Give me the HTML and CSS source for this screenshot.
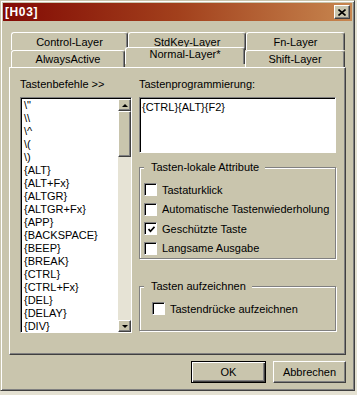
FILE: index.html
```html
<!DOCTYPE html>
<html lang="de">
    <head>
        <meta charset="UTF-8" />
        <meta name="viewport" content="width=device-width, initial-scale=1.0" />
        <title>[H03]</title>
        <link rel="stylesheet" href="styles.css">
    </head>
    <body>
        <div class="window">
            <!-- Titelleiste -->
            <div class="titlebar">
                <span class="title">[H03]</span>
                <button class="close">
                    <svg width="8" height="7" viewBox="0 0 8 7">
                        <path d="M0.5 0.5 L7.5 6.5 M7.5 0.5 L0.5 6.5" stroke="#000" stroke-width="1.6" fill="none" />
                    </svg>
                </button>
            </div>

            <div class="content">
                <!-- Registerkarten -->
                <div class="tabs">
                    <div class="tab-row back">
                        <div class="tab">Control-Layer</div>
                        <div class="tab">StdKey-Layer</div>
                        <div class="tab">Fn-Layer</div>
                    </div>
                    <div class="tab-row front">
                        <div class="tab">AlwaysActive</div>
                        <div class="tab active">Normal-Layer*</div>
                        <div class="tab">Shift-Layer</div>
                    </div>
                </div>

                <div class="panel">
                    <!-- Befehlsliste -->
                    <div class="col-left">
                        <div class="label">Tastenbefehle &gt;&gt;</div>
                        <div class="listbox">
                            <ul class="items">
                                <li>\"</li>
                                <li>\\</li>
                                <li>\^</li>
                                <li>\(</li>
                                <li>\)</li>
                                <li>{ALT}</li>
                                <li>{ALT+Fx}</li>
                                <li>{ALTGR}</li>
                                <li>{ALTGR+Fx}</li>
                                <li>{APP}</li>
                                <li>{BACKSPACE}</li>
                                <li>{BEEP}</li>
                                <li>{BREAK}</li>
                                <li>{CTRL}</li>
                                <li>{CTRL+Fx}</li>
                                <li>{DEL}</li>
                                <li>{DELAY}</li>
                                <li>{DIV}</li>
                            </ul>
                            <div class="scrollbar">
                                <div class="sb-btn"><span class="arrow-up"></span></div>
                                <div class="sb-track"><div class="sb-thumb"></div></div>
                                <div class="sb-btn"><span class="arrow-down"></span></div>
                            </div>
                        </div>
                    </div>

                    <!-- Programmierung und Attribute -->
                    <div class="col-right">
                        <div class="label">Tastenprogrammierung:</div>
                        <div class="textbox">{CTRL}{ALT}{F2}</div>

                        <div class="group attrs">
                            <div class="group-title">Tasten-lokale Attribute</div>
                            <div class="check-row"><span class="checkbox"></span>Tastaturklick</div>
                            <div class="check-row"><span class="checkbox"></span>Automatische Tastenwiederholung</div>
                            <div class="check-row">
                                <span class="checkbox">
                                    <svg width="7" height="7" viewBox="0 0 7 7">
                                        <path d="M0.5 3 L2.5 5.3 L6.5 0.8" stroke="#000" stroke-width="1.7" fill="none" />
                                    </svg>
                                </span>
                                Geschützte Taste
                            </div>
                            <div class="check-row"><span class="checkbox"></span>Langsame Ausgabe</div>
                        </div>

                        <div class="group record">
                            <div class="group-title">Tasten aufzeichnen</div>
                            <div class="check-row"><span class="checkbox"></span>Tastendrücke aufzeichnen</div>
                        </div>
                    </div>
                </div>

                <div class="buttons">
                    <button class="btn default">OK</button>
                    <button class="btn cancel">Abbrechen</button>
                </div>
            </div>
        </div>
    </body>
</html>
```

FILE: styles.css
```css
body {
    margin: 0;
    background-color: #e4e1d2;
    font-family: "Liberation Sans", Arial, sans-serif;
    font-size: 11px;
    color: #000;
}

/* Fenster */
.window {
    width: 355px;
    height: 391px;
    box-sizing: border-box;
    padding: 2px;
    background-color: #c9c5ad;
    border: 1px solid;
    border-color: #c9c5ad #404040 #404040 #c9c5ad;
    box-shadow: inset 1px 1px 0 #fff, inset -1px -1px 0 #808080;
}

/* Titelleiste */
.titlebar {
    height: 18px;
    display: flex;
    align-items: center;
    justify-content: space-between;
    padding: 0 2px 0 2px;
    background: linear-gradient(to right, #820a04, #a2401c 50%, #c7864f);
}

.title {
    color: #fff;
    font-weight: bold;
    font-size: 12px;
    letter-spacing: 0.6px;
}

.close {
    width: 16px;
    height: 14px;
    padding: 0;
    display: flex;
    align-items: center;
    justify-content: center;
    background-color: #c9c5ad;
    border: 1px solid;
    border-color: #fff #404040 #404040 #fff;
    box-shadow: inset -1px -1px 0 #808080;
}

.content {
    padding: 11px 6px 0 6px;
}

/* Registerkarten */
.tabs {
    padding: 0 1px 0 2px;
}

.tab-row {
    display: grid;
}

.tab-row.back {
    grid-template-columns: 117px 118px 99px;
}

.tab-row.front {
    grid-template-columns: 114px 120px 100px;
}

.tab {
    height: 18px;
    box-sizing: border-box;
    display: flex;
    align-items: center;
    justify-content: center;
    border-top: 1px solid #fff;
    border-left: 1px solid #fff;
    border-right: 1px solid #404040;
    border-radius: 3px 3px 0 0;
    box-shadow: inset -1px 0 0 #808080;
}

.tab-row.front .tab {
    height: 17px;
}

.tab.active {
    position: relative;
    z-index: 1;
    height: 21px;
    margin-top: -3px;
    margin-bottom: -1px;
    padding-bottom: 4px;
    background-color: #c9c5ad;
}

/* Registerseite */
.panel {
    height: 288px;
    box-sizing: border-box;
    display: grid;
    grid-template-columns: 112px 197px;
    column-gap: 7px;
    align-items: start;
    padding: 10px 9px 0 10px;
    border: 1px solid;
    border-color: #fff #404040 #404040 #fff;
    box-shadow: inset -1px -1px 0 #808080;
}

.label {
    height: 13px;
    line-height: 13px;
    margin-bottom: 6px;
}

/* Liste */
.listbox {
    height: 236px;
    box-sizing: border-box;
    display: flex;
    background-color: #fff;
    border: 1px solid;
    border-color: #808080 #fff #fff #808080;
    box-shadow: inset 1px 1px 0 #000;
    padding: 1px 0 0 1px;
    overflow: hidden;
}

.items {
    flex: 1;
    margin: 0;
    padding: 0 0 0 2px;
    list-style: none;
}

.items li {
    height: 13px;
    line-height: 13px;
    white-space: nowrap;
}

.scrollbar {
    width: 13px;
    display: flex;
    flex-direction: column;
}

.sb-btn {
    height: 12px;
    box-sizing: border-box;
    display: flex;
    align-items: center;
    justify-content: center;
    background-color: #c9c5ad;
    border: 1px solid;
    border-color: #fff #404040 #404040 #fff;
    box-shadow: inset -1px -1px 0 #808080;
}

.arrow-up {
    border-left: 3px solid transparent;
    border-right: 3px solid transparent;
    border-bottom: 3px solid #000;
}

.arrow-down {
    border-left: 3px solid transparent;
    border-right: 3px solid transparent;
    border-top: 3px solid #000;
}

.sb-track {
    flex: 1;
    background-color: #e6e3d5;
}

.sb-thumb {
    height: 46px;
    box-sizing: border-box;
    background-color: #c9c5ad;
    border: 1px solid;
    border-color: #fff #404040 #404040 #fff;
    box-shadow: inset -1px -1px 0 #808080;
}

/* Eingabefeld */
.textbox {
    height: 56px;
    box-sizing: border-box;
    padding: 3px 2px;
    line-height: 13px;
    background-color: #fff;
    border: 1px solid;
    border-color: #808080 #fff #fff #808080;
    box-shadow: inset 1px 1px 0 #000;
}

/* Gruppen */
.group {
    border: 1px solid #808080;
    box-shadow: 1px 1px 0 #fff, inset 1px 1px 0 #fff;
    padding: 0 0 0 4px;
}

.group.attrs {
    margin-top: 14px;
}

.group.record {
    margin-top: 27px;
    padding-bottom: 12px;
}

.group.record .check-row {
    margin-left: 8px;
}

.group-title {
    display: table;
    height: 13px;
    line-height: 13px;
    margin: -7px 0 6px 0;
    padding: 0 6px 0 7px;
    background-color: #c9c5ad;
}

.check-row {
    height: 19.5px;
    display: flex;
    align-items: center;
    gap: 5px;
}

.group.record .check-row {
    height: 19px;
}

.checkbox {
    width: 13px;
    height: 13px;
    box-sizing: border-box;
    display: flex;
    align-items: center;
    justify-content: center;
    background-color: #fff;
    border: 1px solid;
    border-color: #808080 #fff #fff #808080;
    box-shadow: inset 1px 1px 0 #000;
    padding: 1px 0 0 1px;
}

/* Schaltflächen */
.buttons {
    display: flex;
    justify-content: flex-end;
    gap: 7px;
    margin-top: 6px;
}

.btn {
    height: 22px;
    padding: 0;
    font-family: "Liberation Sans", Arial, sans-serif;
    font-size: 11px;
    color: #000;
    background-color: #c9c5ad;
    border: 1px solid;
}

.btn.default {
    width: 75px;
    border-color: #000;
    box-shadow: inset 1px 1px 0 #fff, inset -1px -1px 0 #404040, inset -2px -2px 0 #808080;
}

.btn.cancel {
    width: 73px;
    border-color: #fff #404040 #404040 #fff;
    box-shadow: inset -1px -1px 0 #808080;
}
```
